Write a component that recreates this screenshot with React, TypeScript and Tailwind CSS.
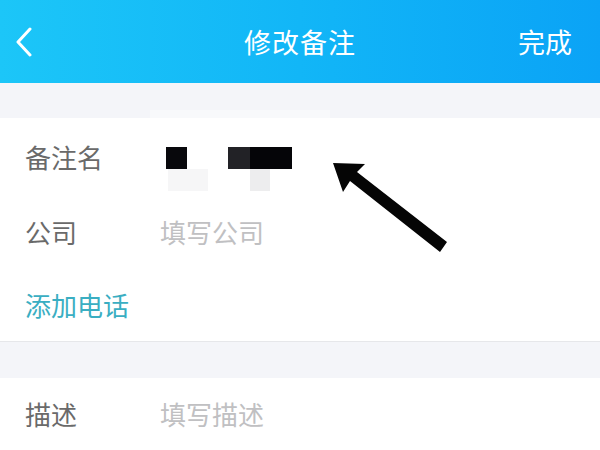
import React from "react";

const font = { fontFamily: '"Noto Sans CJK SC", "Noto Sans", sans-serif' };

export default function App() {
  return (
    <div className="relative w-[600px] h-[450px] overflow-hidden bg-white" style={font}>
      {/* Header */}
      <div className="h-[83px] flex items-center justify-between bg-gradient-to-r from-[#1cc6f8] via-[#12b6f7] to-[#0ba3f6] text-white">
        <div className="w-[120px] pl-[14px] flex items-center">
          <svg width="20" height="30" viewBox="0 0 20 30" fill="none">
            <path d="M16 2 L4 15 L16 28" stroke="white" strokeWidth="3" strokeLinecap="round" strokeLinejoin="round" />
          </svg>
        </div>
        <div className="text-[27px] leading-none tracking-[1px]">修改备注</div>
        <div className="w-[120px] pr-[28px] text-right text-[27px] leading-none">完成</div>
      </div>

      {/* gray band */}
      <div className="h-[35px] bg-[#f4f5f9] flex items-end pl-[150px]">
        <div className="w-[180px] h-[8px] bg-[#f8f9fb]" />
      </div>

      {/* white section */}
      <div className="bg-white">
        <div className="h-[78px] flex items-center pl-[25px]">
          <div className="w-[135px] text-[26px] text-[#6a6a6a] leading-none">备注名</div>
          <div className="relative flex items-center mt-[2px]">
            <div className="ml-[6px] w-[21px] h-[22px] bg-[#08080c]" />
            <div className="ml-[41px] w-[22px] h-[22px] bg-[#222226]" />
            <div className="w-[42px] h-[22px] bg-[#050508]" />
            <div className="absolute left-[8px] top-[22px] w-[40px] h-[22px] bg-[#f6f6f7]" />
            <div className="absolute left-[90px] top-[22px] w-[20px] h-[22px] bg-[#ededee]" />
          </div>
        </div>
        <div className="h-[72px] flex items-center pl-[25px]">
          <div className="w-[135px] text-[26px] text-[#6a6a6a] leading-none">公司</div>
          <div className="text-[26px] text-[#c0c0c2] leading-none">填写公司</div>
        </div>
        <div className="h-[74px] flex items-center pl-[25px] border-b border-[#e6e7ea]">
          <div className="text-[26px] text-[#3aaec2] leading-none">添加电话</div>
        </div>
      </div>

      <div className="h-[36px] bg-[#f4f5f9]" />

      <div className="h-[72px] flex items-center pl-[25px] bg-white">
        <div className="w-[135px] text-[26px] text-[#6a6a6a] leading-none">描述</div>
        <div className="text-[26px] text-[#c0c0c2] leading-none">填写描述</div>
      </div>

      {/* annotation arrow */}
      <svg className="absolute left-0 top-0" width="600" height="450" viewBox="0 0 600 450">
        <polygon points="333,163 365,164 357,172 447,242 440,252 350,181 343,192" fill="#050505" />
      </svg>
    </div>
  );
}
